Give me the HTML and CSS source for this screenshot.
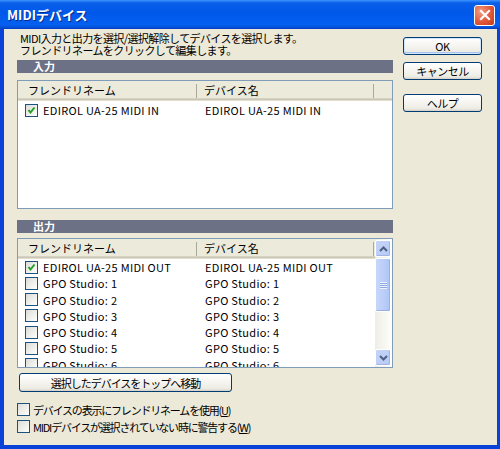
FILE: index.html
```html
<!DOCTYPE html>
<html lang="ja">
<head>
  <meta charset="UTF-8">
  <title>MIDIデバイス</title>
  <link rel="stylesheet" href="styles.css">
</head>
<body>

  <div class="window">
    <div class="titlebar">
      <span class="title">MIDIデバイス</span>
      <button class="close" aria-label="閉じる">
        <svg width="12" height="12" viewBox="0 0 12 12"><path d="M2 2 L10 10 M10 2 L2 10" stroke="#fff" stroke-width="2.2" stroke-linecap="square"/></svg>
      </button>
    </div>

    <div class="client">
      <div class="main">
        <p class="desc">MIDI入力と出力を選択/選択解除してデバイスを選択します。<br>フレンドリネームをクリックして編集します。</p>

        <div class="section">入力</div>
        <div class="listview list-in">
          <div class="lv-content">
            <div class="lv-head">
              <span class="hcol col-name">フレンドリネーム</span>
              <span class="hcol col-dev">デバイス名</span>
              <span class="hcol col-rest"></span>
            </div>
            <div class="row">
              <span class="cell col-name"><i class="cb checked"></i>EDIROL UA-25 MIDI IN</span>
              <span class="cell col-dev">EDIROL UA-25 MIDI IN</span>
            </div>
          </div>
        </div>

        <div class="section section-out">出力</div>
        <div class="listview list-out">
          <div class="lv-content">
            <div class="lv-head">
              <span class="hcol col-name">フレンドリネーム</span>
              <span class="hcol col-dev">デバイス名</span>
            </div>
            <div class="row">
              <span class="cell col-name"><i class="cb checked"></i>EDIROL UA-25 MIDI OUT</span>
              <span class="cell col-dev">EDIROL UA-25 MIDI OUT</span>
            </div>
            <div class="row">
              <span class="cell col-name"><i class="cb"></i>GPO Studio: 1</span>
              <span class="cell col-dev">GPO Studio: 1</span>
            </div>
            <div class="row">
              <span class="cell col-name"><i class="cb"></i>GPO Studio: 2</span>
              <span class="cell col-dev">GPO Studio: 2</span>
            </div>
            <div class="row">
              <span class="cell col-name"><i class="cb"></i>GPO Studio: 3</span>
              <span class="cell col-dev">GPO Studio: 3</span>
            </div>
            <div class="row">
              <span class="cell col-name"><i class="cb"></i>GPO Studio: 4</span>
              <span class="cell col-dev">GPO Studio: 4</span>
            </div>
            <div class="row">
              <span class="cell col-name"><i class="cb"></i>GPO Studio: 5</span>
              <span class="cell col-dev">GPO Studio: 5</span>
            </div>
            <div class="row">
              <span class="cell col-name"><i class="cb"></i>GPO Studio: 6</span>
              <span class="cell col-dev">GPO Studio: 6</span>
            </div>
          </div>
          <div class="scrollbar">
            <div class="sb-btn">
              <svg width="9" height="6" viewBox="0 0 9 6"><path d="M1 5 L4.5 1.5 L8 5" fill="none" stroke="#4d6185" stroke-width="2"/></svg>
            </div>
            <div class="sb-thumb"><span class="grip"></span></div>
            <div class="sb-track"></div>
            <div class="sb-btn">
              <svg width="9" height="6" viewBox="0 0 9 6"><path d="M1 1 L4.5 4.5 L8 1" fill="none" stroke="#4d6185" stroke-width="2"/></svg>
            </div>
          </div>
        </div>

        <button class="btn btn-top">選択したデバイスをトップへ移動</button>

        <label class="check"><i class="cb"></i>デバイスの表示にフレンドリネームを使用(<u>U</u>)</label>
        <label class="check"><i class="cb"></i>MIDIデバイスが選択されていない時に警告する(<u>W</u>)</label>
      </div>

      <div class="side">
        <button class="btn btn-ok">OK</button>
        <button class="btn">キャンセル</button>
        <button class="btn btn-help">ヘルプ</button>
      </div>
    </div>
  </div>

</body>
</html>
```

FILE: styles.css
```css
body {
  margin: 0;
  font-family: "Noto Sans CJK JP", "Noto Sans", sans-serif;
  font-size: 11px;
  color: #000;
}

.window {
  width: 500px;
  height: 449px;
  display: flex;
  flex-direction: column;
  background: #0843d8;
}

/* title bar */
.titlebar {
  height: 29px;
  flex: none;
  display: flex;
  align-items: center;
  justify-content: space-between;
  padding: 0 5px 0 7px;
  background: linear-gradient(to bottom, #3d95ff 0%, #0a5fe8 10%, #0058ea 45%, #0460f0 85%, #0551d8 94%, #033bc0 100%);
}

.title {
  color: #fff;
  font-weight: bold;
  font-size: 13px;
  letter-spacing: 0;
  text-shadow: 1px 1px 0 #0a2a8a;
}

.close {
  width: 21px;
  height: 21px;
  padding: 0;
  margin-top: 1px;
  border: 1px solid #fff;
  border-radius: 3px;
  background: radial-gradient(circle at 30% 30%, #f29c80 0%, #e0573a 55%, #c23a1c 100%);
  display: flex;
  align-items: center;
  justify-content: center;
}

/* dialog area */
.client {
  flex: 1;
  margin: 0 3px 4px 4px;
  background: #ece9d8;
  display: flex;
  gap: 10px;
  padding: 3px 15px 0 13px;
}

.main {
  width: 376px;
  display: flex;
  flex-direction: column;
}

.desc {
  margin: 0;
  padding-left: 3px;
  line-height: 12px;
  letter-spacing: -0.6px;
}

.section {
  height: 13px;
  margin-top: 4px;
  background: #6d7186;
  color: #fff;
  font-weight: bold;
  line-height: 13px;
  padding-left: 16px;
}

.section-out {
  margin-top: 11px;
}

/* list views */
.listview {
  margin-top: 7px;
  border: 1px solid #7f9db9;
  background: #fff;
  display: flex;
  overflow: hidden;
  box-sizing: border-box;
}

.list-in {
  height: 129px;
}

.list-out {
  margin-top: 5px;
  height: 130px;
}

.lv-content {
  flex: 1;
  overflow: hidden;
}

.lv-head {
  height: 20px;
  display: flex;
  background: #ebeadb;
  box-shadow: inset 0 -1px 0 #e2decd, inset 0 -2px 0 #cbc7b8, inset 0 -3px 0 #d6d2c2;
}

.hcol {
  height: 17px;
  line-height: 18px;
  box-sizing: border-box;
  flex: none;
}

.col-name {
  width: 179px;
  padding-left: 11px;
}

.lv-head .col-name,
.lv-head .col-dev {
  border-right: 1px solid #aca899;
  margin: 3px 0 0;
  height: 14px;
  line-height: 13px;
}

.lv-head .col-name {
  padding-left: 10px;
}

.col-dev {
  width: 177px;
  padding-left: 8px;
}

.lv-head .col-dev {
  padding-left: 7px;
}

.row {
  display: flex;
  height: 16.25px;
  align-items: center;
  letter-spacing: 0.3px;
}

.list-in .row {
  margin-top: 1px;
}

.list-out .row:first-of-type {
  margin-top: 3px;
}

.cell {
  flex: none;
  display: flex;
  align-items: center;
  white-space: nowrap;
  box-sizing: border-box;
}

.cell.col-name {
  padding-left: 7px;
}

.cell .cb {
  margin-right: 5px;
}

/* checkboxes */
.cb {
  display: inline-block;
  width: 13px;
  height: 13px;
  box-sizing: border-box;
  border: 1px solid #1c5180;
  background: linear-gradient(135deg, #dcdcd7 0%, #f4f4f1 70%, #fff 100%);
  flex: none;
}

.cb.checked {
  background:
    url("data:image/svg+xml,%3Csvg xmlns='http://www.w3.org/2000/svg' width='11' height='11'%3E%3Cpath d='M2.5 5 L4.5 7.5 L8.5 2.5' fill='none' stroke='%2321a121' stroke-width='2'/%3E%3C/svg%3E") center/11px 11px no-repeat,
    linear-gradient(135deg, #dcdcd7 0%, #f4f4f1 70%, #fff 100%);
}

/* scrollbar */
.scrollbar {
  width: 17px;
  flex: none;
  display: flex;
  flex-direction: column;
  padding: 1px 1px 1px 0;
  box-sizing: border-box;
  background: linear-gradient(to right, #eeede5, #fefefb);
}

.sb-btn {
  height: 15px;
  border: 1px solid #fff;
  border-radius: 2px;
  background: linear-gradient(135deg, #c6d3f7, #b7caf5);
  display: flex;
  align-items: center;
  justify-content: center;
  flex: none;
  box-shadow: inset -1px -1px 0 #a0b4e6;
}

.sb-thumb {
  height: 52px;
  margin-top: 1px;
  border: 1px solid #fff;
  border-radius: 2px;
  background: linear-gradient(to right, #c8d6fb, #b9cdf9 60%, #aec4f6);
  box-shadow: inset -1px -1px 0 #98b0e8;
  display: flex;
  align-items: center;
  justify-content: center;
  flex: none;
}

.grip {
  width: 7px;
  height: 7px;
  background: repeating-linear-gradient(to bottom, #eef3fe 0 1px, #8ca7e4 1px 2px);
}

.sb-track {
  flex: 1;
}

/* buttons */
.btn {
  font-family: inherit;
  font-size: 11px;
  color: #000;
  border: 1px solid #003c74;
  border-radius: 3px;
  background: linear-gradient(to bottom, #fff 0%, #f5f4ef 50%, #ecebe4 85%, #d6d0c5 100%);
  padding: 0;
  box-sizing: border-box;
  letter-spacing: -0.5px;
}

.btn-top {
  width: 213px;
  height: 19px;
  margin: 5px 0 0 2px;
  letter-spacing: -1px;
}

.side {
  width: 79px;
  padding-top: 5px;
  display: flex;
  flex-direction: column;
  gap: 7px;
}

.side .btn {
  height: 18px;
}

.btn-ok {
  box-shadow: inset 0 0 0 1px #cee7ff, inset 0 -1px 0 1px #a6c3ee;
}

.btn-help {
  margin-top: 7px;
}

/* option checkboxes */
.check {
  display: flex;
  align-items: center;
  height: 17px;
  letter-spacing: -1.2px;
}

.check:first-of-type {
  margin-top: 9px;
}

.check .cb {
  margin-right: 3px;
}
```
